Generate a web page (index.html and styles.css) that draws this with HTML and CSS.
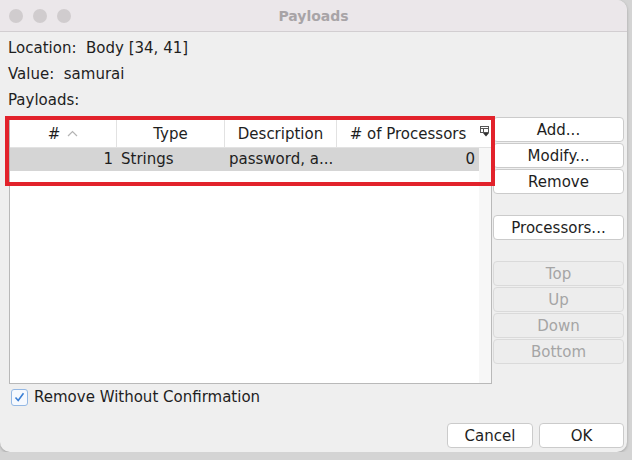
FILE: index.html
```html
<!DOCTYPE html>
<html lang="en">
<head>
  <meta charset="UTF-8">
  <title>Payloads</title>
  <link rel="stylesheet" href="styles.css">
</head>
<body>
  <div class="window">
    <div class="titlebar">
      <div class="lights">
        <span class="light"></span>
        <span class="light"></span>
        <span class="light"></span>
      </div>
      <div class="title">Payloads</div>
      <div class="lights-spacer"></div>
    </div>

    <div class="content">
      <div class="main">
        <div class="left">
          <div class="info">Location:&nbsp; Body [34, 41]</div>
          <div class="info">Value:&nbsp; samurai</div>
          <div class="info">Payloads:</div>

          <div class="pane">
            <div class="table">
              <div class="thead">
                <div class="th c1">#
                  <svg class="sort" width="11" height="7" viewBox="0 0 11 7"><polyline points="1,6 5.5,1.5 10,6" fill="none" stroke="#b4b4b4" stroke-width="1.2"/></svg>
                </div>
                <div class="th c2">Type</div>
                <div class="th c3">Description</div>
                <div class="th c4"># of Processors</div>
              </div>
              <div class="tr selected">
                <div class="td c1 num">1</div>
                <div class="td c2">Strings</div>
                <div class="td c3">password, a...</div>
                <div class="td c4 num">0</div>
              </div>
            </div>
            <div class="strip">
              <div class="corner">
                <svg width="10" height="11" viewBox="0 0 10 11">
                  <rect x="0.5" y="0.5" width="8" height="6" fill="none" stroke="#555" stroke-width="1"/>
                  <line x1="0.5" y1="2.5" x2="8.5" y2="2.5" stroke="#555"/>
                  <line x1="3.5" y1="2.5" x2="3.5" y2="6.5" stroke="#555"/>
                  <polygon points="3,7 9,7 6,10.5" fill="#333"/>
                </svg>
              </div>
            </div>
            <div class="highlight"></div>
          </div>

          <label class="check-row">
            <span class="checkbox">
              <svg width="11" height="10" viewBox="0 0 11 10"><polyline points="1.5,5.5 4.2,8.5 9.5,1.2" fill="none" stroke="#3a7fd5" stroke-width="1.6"/></svg>
            </span>
            Remove Without Confirmation
          </label>
        </div>

        <div class="right">
          <button class="btn">Add...</button>
          <button class="btn">Modify...</button>
          <button class="btn">Remove</button>
          <button class="btn spaced">Processors...</button>
          <button class="btn spaced" disabled>Top</button>
          <button class="btn" disabled>Up</button>
          <button class="btn" disabled>Down</button>
          <button class="btn" disabled>Bottom</button>
        </div>
      </div>

      <div class="actions">
        <button class="btn action cancel">Cancel</button>
        <button class="btn action ok">OK</button>
      </div>
    </div>
  </div>
</body>
</html>
```

FILE: styles.css
```css
body {
  margin: 0;
  background-color: #d4d4d4;
  font-family: "DejaVu Sans", sans-serif;
  font-size: 15px;
  color: #1e1e1e;
}
.window {
  width: 627px;
  height: 452px;
  background-color: #efefef;
  border-radius: 0 10px 10px 10px;
  overflow: hidden;
  box-shadow: 0 1px 3px rgba(0, 0, 0, 0.25);
}
.titlebar {
  height: 31px;
  background-color: #ebe7ea;
  border-bottom: 1px solid #d2ced1;
  display: flex;
  align-items: center;
}
.lights,
.lights-spacer {
  width: 80px;
  display: flex;
  gap: 10px;
  padding-left: 9px;
  box-sizing: border-box;
}
.light {
  width: 14px;
  height: 14px;
  border-radius: 50%;
  background-color: #d0ccce;
}
.title {
  flex: 1;
  text-align: center;
  font-weight: bold;
  color: #a8a4a7;
  font-size: 14px;
}
.content {
  padding: 3px 3px 0 8px;
}
.main {
  display: flex;
  gap: 1px;
}
.left {
  width: 484px;
}
.info {
  height: 26px;
  line-height: 26px;
}
.pane {
  position: relative;
  margin: 6px 0 0 1px;
  height: 265px;
  border: 1px solid #b9b9b9;
  background-color: #fff;
  display: flex;
  box-sizing: border-box;
}
.table {
  width: 469px;
}
.thead,
.tr {
  display: flex;
}
.thead {
  height: 28px;
  border-bottom: 1px solid #e2e2e2;
  box-sizing: border-box;
}
.th {
  display: flex;
  align-items: center;
  justify-content: center;
  gap: 7px;
  border-right: 1px solid #e2e2e2;
  box-sizing: border-box;
}
.c1 { width: 107px; }
.c2 { width: 108px; }
.c3 { width: 112px; }
.c4 { width: 142px; }
.th.c4 {
  border-right: none;
}
.tr {
  height: 23px;
  line-height: 23px;
}
.tr.selected {
  background-color: #d5d5d5;
}
.td {
  padding: 0 4px;
  box-sizing: border-box;
  white-space: nowrap;
  overflow: hidden;
}
.td.num {
  text-align: right;
}
.strip {
  flex: 1;
  background-color: #f7f7f7;
}
.corner {
  height: 28px;
  background-color: #fff;
  border-bottom: 1px solid #e2e2e2;
  box-sizing: border-box;
  display: flex;
  justify-content: center;
  padding-top: 6px;
}
.highlight {
  position: absolute;
  left: -5px;
  top: -4px;
  width: 490px;
  height: 70px;
  border: 4px solid #e2222b;
  box-sizing: border-box;
}
.check-row {
  height: 26px;
  display: flex;
  align-items: center;
  gap: 6px;
  padding-left: 3px;
}
.checkbox {
  width: 15px;
  height: 15px;
  border: 1px solid #94b8e4;
  border-radius: 3px;
  background-color: #f6f9fe;
  display: flex;
  align-items: center;
  justify-content: center;
}
.right {
  width: 131px;
  padding-top: 82px;
  display: flex;
  flex-direction: column;
  gap: 1px;
}
.btn {
  height: 25px;
  padding: 0;
  font-family: "DejaVu Sans", sans-serif;
  font-size: 15px;
  color: #1e1e1e;
  background-color: #fff;
  border: 1px solid #cbcbcb;
  border-radius: 4px;
}
.btn.spaced {
  margin-top: 20px;
}
.btn:disabled {
  background-color: #ededed;
  border-color: #dadada;
  color: #a5a5a5;
}
.actions {
  display: flex;
  justify-content: flex-end;
  gap: 6px;
  margin-top: 13px;
}
.action {
  height: 25px;
}
.cancel { width: 86px; }
.ok { width: 85px; }
```
